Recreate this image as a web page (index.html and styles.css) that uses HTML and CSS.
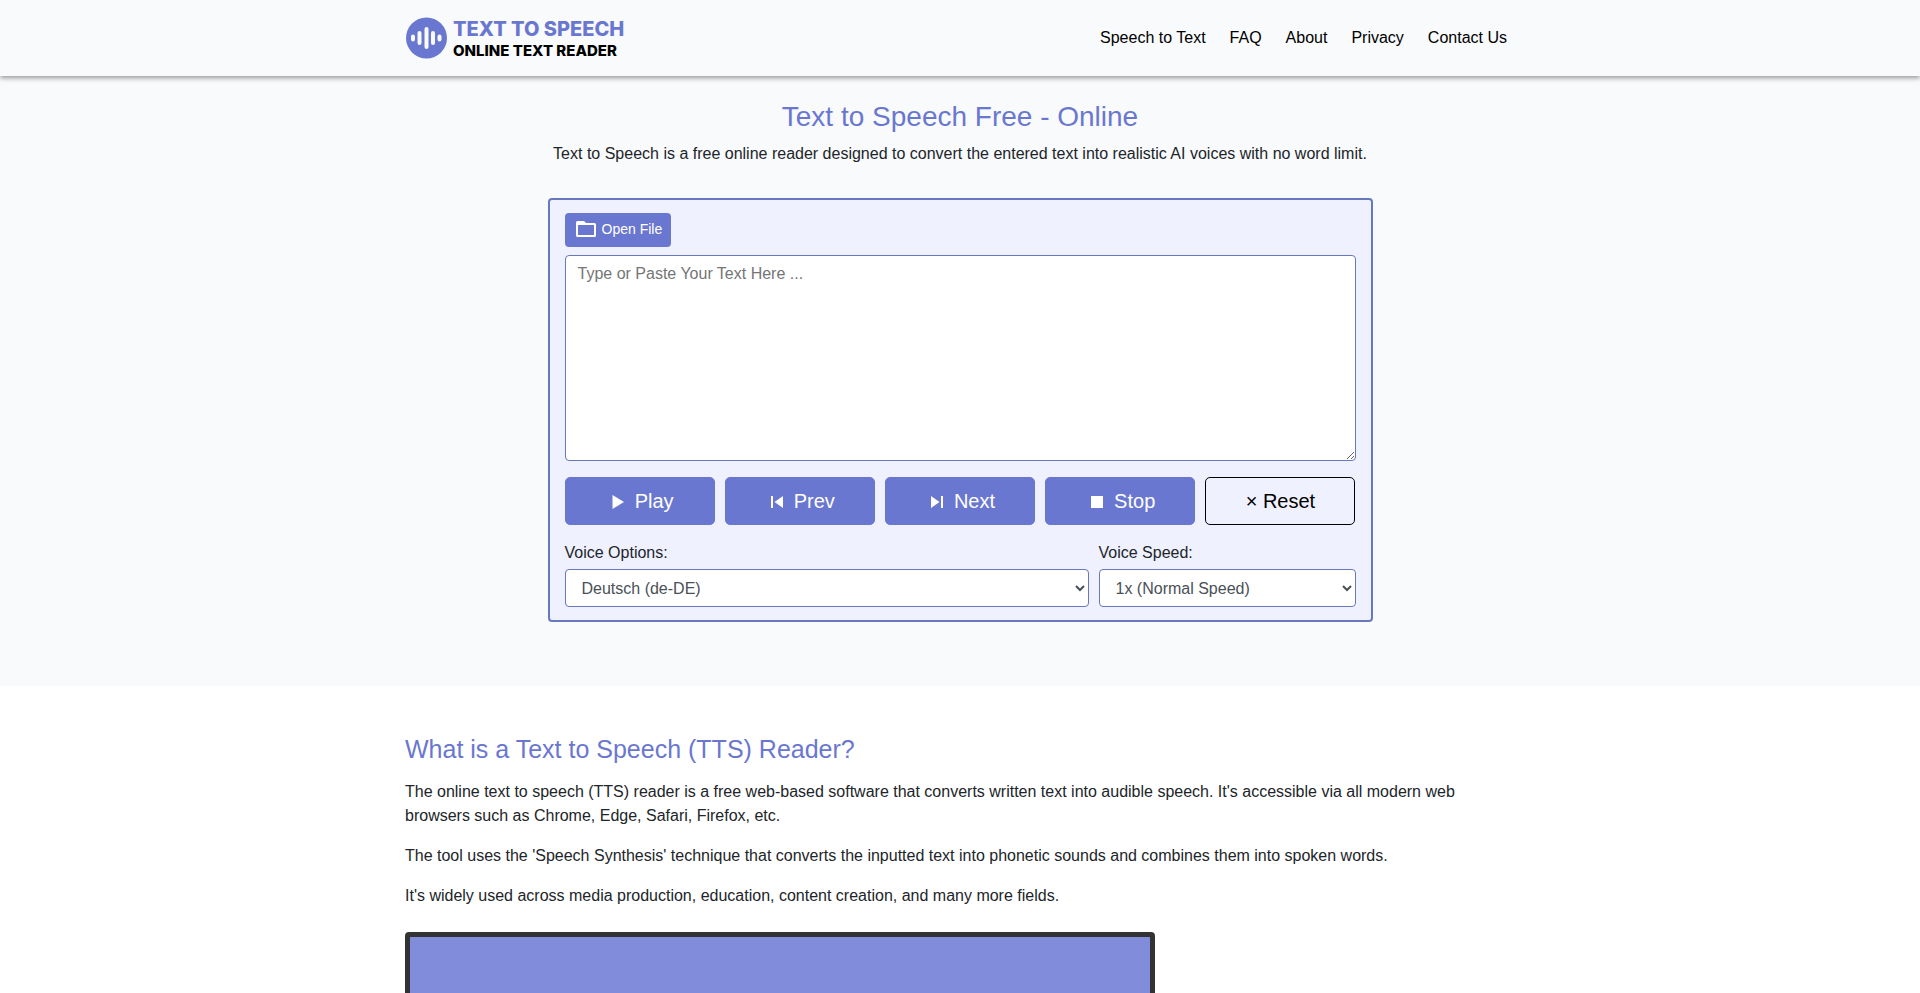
FILE: index.html
```html
<!DOCTYPE html>
<html lang="en">
<head>
<meta charset="utf-8">
<meta name="viewport" content="width=device-width, initial-scale=1">
<title>Text to Speech Free - Online</title>
<link rel="stylesheet" href="styles.css">
</head>
<body>
<header class="site-header">
  <div class="container header-row">
    <a class="brand" href="#">
      <svg class="brand-mark" viewBox="0 0 42 42" aria-hidden="true">
        <circle cx="21.500" cy="21" r="20.500" fill="#6a77d0"/>
        <g stroke="#f8fafc" stroke-width="4" stroke-linecap="round">
          <path d="M8 19.500v3M14.500 16v10M21.500 12v18M28 16v10M34.500 19.500v3"/>
        </g>
      </svg>
      <span class="brand-text">
        <span class="brand-name">TEXT TO SPEECH</span>
        <span class="brand-tag">ONLINE TEXT READER</span>
      </span>
    </a>
    <nav class="nav">
      <a href="#">Speech to Text</a>
      <a href="#">FAQ</a>
      <a href="#">About</a>
      <a href="#">Privacy</a>
      <a href="#">Contact Us</a>
    </nav>
  </div>
</header>
<main>
  <section class="hero">
    <h1>Text to Speech Free - Online</h1>
    <p class="lead">Text to Speech is a free online reader designed to convert the entered text into realistic AI voices with no word limit.</p>
    <form class="reader">
      <button class="open-file" type="button">
        <svg class="folder" viewBox="0 0 20 16" aria-hidden="true"><path fill="#fff" fill-rule="evenodd" d="M1.500 0H8l2 2h8.500A1.500 1.500 0 0 1 20 3.500v11a1.500 1.500 0 0 1-1.500 1.500h-17A1.500 1.500 0 0 1 0 14.500v-13A1.500 1.500 0 0 1 1.500 0ZM2 4v10h16V4Z"/></svg>
        Open File
      </button>
      <textarea class="field text-input" aria-label="Text to read" placeholder="Type or Paste Your Text Here ..."></textarea>
      <div class="actions">
        <button class="btn btn-icon" type="button"><svg class="icon" viewBox="0 0 12 14" aria-hidden="true"><path fill="currentColor" d="M0.500 0L12 7L0.500 14z"/></svg>Play</button>
        <button class="btn btn-icon" type="button"><svg class="icon" viewBox="0 0 12 14" aria-hidden="true"><path fill="currentColor" d="M0 1h2v12H0zM12 1v12L3.500 7z"/></svg>Prev</button>
        <button class="btn btn-icon" type="button"><svg class="icon" viewBox="0 0 12 14" aria-hidden="true"><path fill="currentColor" d="M10 1h2v12h-2zM0 1v12L8.500 7z"/></svg>Next</button>
        <button class="btn btn-icon" type="button"><svg class="icon" viewBox="0 0 12 14" aria-hidden="true"><path fill="currentColor" d="M0 1h12v12H0z"/></svg>Stop</button>
        <button class="btn btn-reset" type="reset">× Reset</button>
      </div>
      <div class="options">
        <div class="option">
          <label for="voice">Voice Options:</label>
          <select class="field" id="voice"><option>Deutsch (de-DE)</option></select>
        </div>
        <div class="option">
          <label for="speed">Voice Speed:</label>
          <select class="field" id="speed"><option>1x (Normal Speed)</option></select>
        </div>
      </div>
    </form>
  </section>
  <article class="container about">
    <h2>What is a Text to Speech (TTS) Reader?</h2>
    <p>The online text to speech (TTS) reader is a free web-based software that converts written text into audible speech. It's accessible via all modern web browsers such as Chrome, Edge, Safari, Firefox, etc.</p>
    <p>The tool uses the 'Speech Synthesis' technique that converts the inputted text into phonetic sounds and combines them into spoken words.</p>
    <p>It's widely used across media production, education, content creation, and many more fields.</p>
    <div class="figure"></div>
  </article>
</main>
</body>
</html>
```
FILE: styles.css
```css
:root {
  --accent: #6a77d0;
  --line: #6878bf;
  --page: #f8fafc;
}
*, *::before, *::after { box-sizing: border-box; }
body {
  margin: 0;
  font: 16px/24px "Liberation Sans", Arial, sans-serif;
  color: #212529;
  background: #fff;
}
.container {
  max-width: 1140px;
  margin: 0 auto;
  padding: 0 15px;
}
.site-header {
  position: relative;
  background: var(--page);
  box-shadow: 0 2px 5px rgba(0, 0, 0, 0.4);
}
.header-row {
  display: flex;
  align-items: center;
  justify-content: space-between;
  min-height: 76px;
}
.brand {
  display: flex;
  align-items: center;
  gap: 6px;
  text-decoration: none;
}
.brand-mark { width: 42px; height: 42px; }
.brand-text {
  display: flex;
  flex-direction: column;
  padding-top: 2px;
  font-family: Inter, sans-serif;
  font-weight: 800;
}
.brand-name { font-size: 20px; line-height: 24px; color: var(--accent); }
.brand-tag { font-size: 15px; line-height: 20px; color: #000; }
.nav {
  display: flex;
  gap: 8px;
}
.nav a {
  padding: 8px;
  color: #000;
  text-decoration: none;
}
.hero {
  padding: 24px 15px 64px;
  background: var(--page);
  text-align: center;
}
h1, h2 {
  margin: 0;
  font-weight: 400;
  color: var(--accent);
}
h1 { font-size: 28px; line-height: 34px; }
.lead { margin: 8px 0 32px; }
.reader {
  max-width: 825px;
  margin: 0 auto;
  padding: 13px 15px;
  border: 2px solid var(--line);
  border-radius: 4px;
  background: #eff1ff;
  text-align: left;
}
button {
  font-family: inherit;
  cursor: pointer;
}
.open-file {
  display: flex;
  align-items: center;
  gap: 6px;
  height: 34px;
  margin-bottom: 8px;
  padding: 0 9px 2px 11px;
  border: 0;
  border-radius: 4px;
  background: var(--accent);
  color: #fff;
  font-size: 14px;
}
.folder { width: 20px; height: 16px; }
.field {
  display: block;
  width: 100%;
  padding: 6px 12px;
  border: 1px solid var(--line);
  border-radius: 4px;
  background: #fff;
  color: #495057;
  font: inherit;
}
.text-input {
  height: 206px;
  resize: vertical;
}
.text-input::placeholder { color: #757575; }
select.field { height: 38px; }
.actions {
  display: grid;
  grid-template-columns: repeat(5, 1fr);
  gap: 10px;
  margin: 16px 0;
}
.btn {
  display: flex;
  align-items: center;
  justify-content: center;
  gap: 11px;
  height: 48px;
  padding: 0;
  border: 1px solid var(--accent);
  border-radius: 5px;
  background: var(--accent);
  color: #fff;
  font-size: 20px;
}
.btn-icon { padding-left: 6px; }
.btn-reset {
  border-color: #000;
  background: transparent;
  color: #000;
}
.icon {
  width: 12px;
  height: 14px;
  margin-top: 2px;
}
.options {
  display: grid;
  grid-template-columns: 1fr calc((100% + 10px) / 3 - 10px);
  gap: 10px;
}
.option label {
  display: block;
  margin-bottom: 4px;
}
.about { padding-top: 47px; }
h2 { margin-bottom: 15px; font-size: 25px; line-height: 32px; }
.about p { margin: 0 0 16px; }
.about .figure {
  max-width: 750px;
  height: 400px;
  margin-top: 24px;
  border: 5px solid #333;
  border-radius: 4px;
  background: #818ddb;
}
```
